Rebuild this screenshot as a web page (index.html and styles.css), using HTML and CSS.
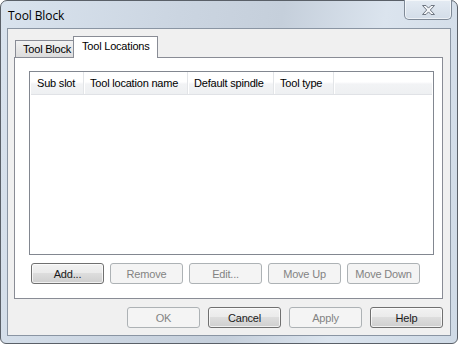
FILE: index.html
```html
<!DOCTYPE html>
<html lang="en">
<head>
  <meta charset="UTF-8">
  <title>Tool Block</title>
  <link rel="stylesheet" href="styles.css">
</head>
<body>
  <div class="window">
    <div class="titlebar">
      <span class="title">Tool Block</span>
      <button class="close-btn">
        <svg width="15" height="12" viewBox="0 0 15 12">
          <path d="M1.5 1.5h3.5l2.5 2.6 2.5-2.6h3.5l-4.2 4.5 4.2 4.5h-3.5l-2.5-2.6-2.5 2.6h-3.5l4.2-4.5z" fill="#f4f6f9" stroke="#6f7782" stroke-width="1"/>
        </svg>
      </button>
    </div>

    <div class="client">
      <div class="tabs">
        <div class="tab">Tool Block</div>
        <div class="tab active">Tool Locations</div>
      </div>

      <div class="panel">
        <div class="listview">
          <div class="list-header">
            <div class="col col-slot">Sub slot</div>
            <div class="col col-name">Tool location name</div>
            <div class="col col-spindle">Default spindle</div>
            <div class="col col-type">Tool type</div>
            <div class="col col-rest"></div>
          </div>
        </div>

        <div class="list-buttons">
          <button class="btn">Add...</button>
          <button class="btn" disabled>Remove</button>
          <button class="btn" disabled>Edit...</button>
          <button class="btn" disabled>Move Up</button>
          <button class="btn" disabled>Move Down</button>
        </div>
      </div>

      <div class="dialog-buttons">
        <button class="btn" disabled>OK</button>
        <button class="btn">Cancel</button>
        <button class="btn" disabled>Apply</button>
        <button class="btn">Help</button>
      </div>
    </div>
  </div>
</body>
</html>
```

FILE: styles.css
```css
* {
  box-sizing: border-box;
}

body {
  margin: 0;
  background: #ffffff;
  font-family: 'Liberation Sans', Arial, sans-serif;
  font-size: 11px;
  letter-spacing: -0.2px;
  color: #000000;
}

.window {
  width: 458px;
  height: 344px;
  border: 1px solid #5a6068;
  border-radius: 7px 7px 6px 6px;
  background: linear-gradient(100deg, #d9e3ee 0%, #cbd5e1 35%, #c5cfdb 55%, #dbe4ee 75%, #cfdae6 100%);
  display: flex;
  flex-direction: column;
}

.titlebar {
  height: 27px;
  display: flex;
  justify-content: space-between;
  align-items: flex-start;
  padding: 0 5px 0 7px;
}

.title {
  font-family: 'Open Sans', 'Liberation Sans', sans-serif;
  font-size: 12px;
  letter-spacing: -0.1px;
  margin-top: 6px;
  color: #000000;
}

.close-btn {
  margin-top: -1px;
  width: 48px;
  height: 20px;
  padding: 0;
  border: 1px solid #7f8a97;
  border-top: none;
  border-radius: 0 0 5px 5px;
  background: linear-gradient(#e4ebf3, #d3dde8);
  box-shadow: inset 0 0 0 1px rgba(255, 255, 255, 0.6);
  display: flex;
  align-items: center;
  justify-content: center;
}

.client {
  flex: 1;
  margin: 0 6px 7px 6px;
  border: 1px solid #8a95a3;
  background: #f0f0f0;
  padding: 7px 7px 7px 6px;
  display: flex;
  flex-direction: column;
}

.tabs {
  display: flex;
  align-items: flex-end;
  height: 21px;
  padding-left: 1px;
}

.tab {
  width: 59px;
  height: 17px;
  padding: 0 0 0 7px;
  border: 1px solid #898c95;
  border-bottom: none;
  background: linear-gradient(#f2f2f2, #dcdcdc);
  line-height: 16px;
  white-space: nowrap;
  overflow: hidden;
}

.tab.active {
  height: 22px;
  width: 85px;
  padding: 0 0 0 8px;
  background: #ffffff;
  line-height: 18px;
  margin-left: -1px;
  margin-bottom: -1px;
  position: relative;
  z-index: 1;
}

.panel {
  height: 242px;
  border: 1px solid #898c95;
  background: #ffffff;
  padding: 13px 8px 0 14px;
}

.listview {
  height: 184px;
  border: 1px solid #828790;
  background: #ffffff;
  padding: 0 1px;
}

.list-header {
  display: flex;
  height: 23px;
  border-bottom: 1px solid #e0e2e6;
  background: linear-gradient(#ffffff 0%, #ffffff 45%, #f2f3f5 55%, #eef0f2 100%);
}

.col {
  line-height: 22px;
  padding-left: 6px;
  border-right: 1px solid #e3e5e8;
  box-shadow: 1px 0 0 #ffffff;
  white-space: nowrap;
}

.col-slot { width: 53px; }
.col-name { width: 104px; }
.col-spindle { width: 86px; }
.col-type { width: 60px; }
.col-rest { flex: 1; border-right: none; box-shadow: none; }

.list-buttons {
  display: flex;
  gap: 6px;
  margin-top: 8px;
  padding-left: 2px;
}

.btn {
  width: 73px;
  height: 21px;
  padding: 0;
  border: 1px solid #707070;
  border-radius: 3px;
  background: linear-gradient(#f2f2f2 0%, #ebebeb 45%, #dddddd 50%, #cfcfcf 100%);
  box-shadow: inset 0 0 0 1px rgba(255, 255, 255, 0.7);
  font-family: 'Liberation Sans', Arial, sans-serif;
  font-size: 11px;
  letter-spacing: -0.2px;
  color: #1a1a1a;
}

.btn:disabled {
  border-color: #adb2b5;
  background: #f4f4f4;
  box-shadow: none;
  color: #838383;
}

.dialog-buttons {
  display: flex;
  justify-content: flex-end;
  gap: 8px;
  margin-top: 8px;
}
```
